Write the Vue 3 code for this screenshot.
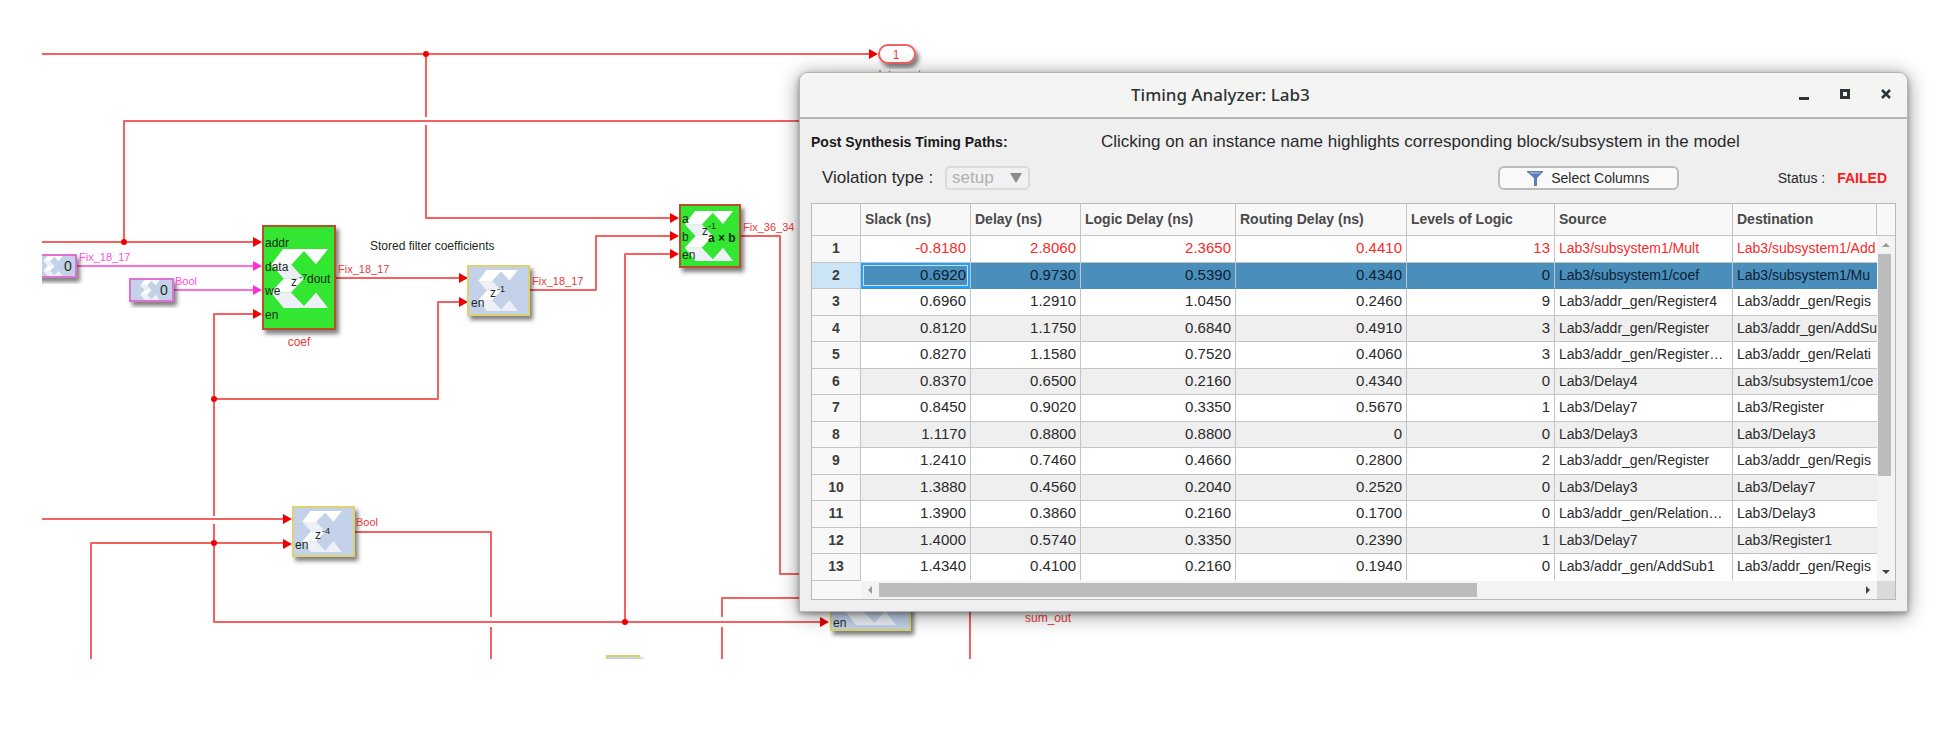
<script setup>
import { ref } from 'vue'

const columns = [
  'Slack (ns)',
  'Delay (ns)',
  'Logic Delay (ns)',
  'Routing Delay (ns)',
  'Levels of Logic',
  'Source',
  'Destination',
]

const paths = [
  ['-0.8180', '2.8060', '2.3650', '0.4410', '13', 'Lab3/subsystem1/Mult', 'Lab3/subsystem1/Add'],
  ['0.6920', '0.9730', '0.5390', '0.4340', '0', 'Lab3/subsystem1/coef', 'Lab3/subsystem1/Mu'],
  ['0.6960', '1.2910', '1.0450', '0.2460', '9', 'Lab3/addr_gen/Register4', 'Lab3/addr_gen/Regis'],
  ['0.8120', '1.1750', '0.6840', '0.4910', '3', 'Lab3/addr_gen/Register', 'Lab3/addr_gen/AddSu'],
  ['0.8270', '1.1580', '0.7520', '0.4060', '3', 'Lab3/addr_gen/Register…', 'Lab3/addr_gen/Relati'],
  ['0.8370', '0.6500', '0.2160', '0.4340', '0', 'Lab3/Delay4', 'Lab3/subsystem1/coe'],
  ['0.8450', '0.9020', '0.3350', '0.5670', '1', 'Lab3/Delay7', 'Lab3/Register'],
  ['1.1170', '0.8800', '0.8800', '0', '0', 'Lab3/Delay3', 'Lab3/Delay3'],
  ['1.2410', '0.7460', '0.4660', '0.2800', '2', 'Lab3/addr_gen/Register', 'Lab3/addr_gen/Regis'],
  ['1.3880', '0.4560', '0.2040', '0.2520', '0', 'Lab3/Delay3', 'Lab3/Delay7'],
  ['1.3900', '0.3860', '0.2160', '0.1700', '0', 'Lab3/addr_gen/Relation…', 'Lab3/Delay3'],
  ['1.4000', '0.5740', '0.3350', '0.2390', '1', 'Lab3/Delay7', 'Lab3/Register1'],
  ['1.4340', '0.4100', '0.2160', '0.1940', '0', 'Lab3/addr_gen/AddSub1', 'Lab3/addr_gen/Regis'],
]

const selected = ref(1)

const wires = [
  'M42 54H870',
  'M426 54V117M426 125V218H672',
  'M124 242V121H810',
  'M42 242H254',
  'M336 278H460',
  'M254 314H214V516M214 524V622H822',
  'M214 399H438V302H460',
  'M530 290H596V236H672',
  'M741 236H780V574H810',
  'M625 622V254H672',
  'M42 519H284',
  'M91 670V543H284',
  'M354 532H491V617M491 627V670',
  'M722 670V627M722 617V598H810',
  'M970 600V670',
]

const arrows = [
  [878, 54], [262, 242], [262, 314], [468, 278], [468, 302],
  [679, 218], [679, 236], [679, 254], [292, 519], [292, 544], [829, 622],
]

const dots = [[426, 54], [124, 242], [214, 399], [214, 543], [625, 622]]
</script>

<template>
  <main class="desktop">
    <svg class="model" role="img" aria-label="Simulink model">
      <defs>
        <clipPath id="sheet"><rect x="42" y="0" width="1870" height="659" /></clipPath>
        <filter id="drop" x="-20%" y="-20%" width="150%" height="150%">
          <feDropShadow dx="3" dy="4" stdDeviation="2" flood-color="#000" flood-opacity="0.5" />
        </filter>
        <symbol id="logo" viewBox="0 0 57 59">
          <path fill="#fff" d="M12 0H57L45 15.300L33 2L20 16H0ZM12.700 29.500H33L20 43.500H0Z" />
          <path fill="#edf1f7" d="M0 15.500H20L33 29.500H12.700ZM0 43.500H20L33 57L45 43.500L57 59H12.700Z" />
        </symbol>
      </defs>

      <g clip-path="url(#sheet)">
        <path v-for="d in wires" :key="d" class="wire" :d="d" />
        <path class="wire pink" d="M77 266H254M174 290H254" />
        <path
          v-for="[x, y] in arrows"
          :key="`a${x}-${y}`"
          class="arrow"
          :d="`M${x} ${y}l-9 -5v10z`"
        />
        <path class="arrow pink" d="M262 266l-9 -5v10zM262 290l-9 -5v10z" />
        <circle v-for="[x, y] in dots" :key="`d${x}-${y}`" class="dot" :cx="x" :cy="y" r="3" />

        <!-- constants -->
        <rect class="block const" x="33" y="255" width="43" height="22" />
        <use href="#logo" x="43" y="256" width="20" height="20" />
        <text class="port big" x="64" y="271">0</text>
        <rect class="block const" x="130" y="279" width="43" height="22" />
        <use href="#logo" x="140" y="280" width="20" height="20" />
        <text class="port big" x="160" y="295">0</text>

        <!-- coefficient RAM -->
        <rect class="block green" x="263" y="226" width="72" height="103" />
        <use href="#logo" x="271" y="249" width="57" height="59" />
        <text class="port" x="265" y="247">addr</text>
        <text class="port" x="265" y="271">data</text>
        <text class="port" x="265" y="295">we</text>
        <text class="port" x="265" y="319">en</text>
        <text class="port" x="307" y="283">dout</text>
        <text class="port" x="291" y="286">z</text>
        <text class="exp" x="299" y="280">-7</text>
        <text class="name" x="299" y="346">coef</text>

        <!-- delay after the coefficients -->
        <rect class="block blue" x="468" y="266" width="61" height="49" />
        <use href="#logo" x="478" y="270" width="40" height="41" />
        <text class="port" x="471" y="307">en</text>
        <text class="port" x="490" y="297">z</text>
        <text class="exp" x="497" y="292">-1</text>

        <!-- multiplier -->
        <rect class="block green" x="680" y="205" width="60" height="62" />
        <use href="#logo" x="684" y="211" width="50" height="50" />
        <text class="port" x="682" y="223">a</text>
        <text class="port" x="682" y="241">b</text>
        <text class="port" x="682" y="259">en</text>
        <text class="port" x="702" y="235">z</text>
        <text class="exp" x="708" y="229">-1</text>
        <text class="port bold" x="708" y="242">a × b</text>

        <!-- lower delay -->
        <rect class="block blue" x="293" y="507" width="61" height="49" />
        <use href="#logo" x="302" y="511" width="40" height="41" />
        <text class="port" x="295" y="549">en</text>
        <text class="port" x="315" y="539">z</text>
        <text class="exp" x="322" y="534">-4</text>

        <!-- blocks partly out of sight -->
        <rect class="block blue" x="831" y="560" width="79" height="70" />
        <use href="#logo" x="845" y="572" width="51" height="53" />
        <text class="port" x="833" y="627">en</text>
        <rect class="block blue" x="607" y="656" width="32" height="40" />

        <!-- output port -->
        <rect class="block outport" x="879" y="45" width="36" height="18" rx="9" />
        <text class="name" x="896" y="59">1</text>
        <text class="name" x="898" y="79">data_out</text>

        <text class="signal pink" x="79" y="261">Fix_18_17</text>
        <text class="signal pink" x="175" y="285">Bool</text>
        <text class="signal" x="338" y="273">Fix_18_17</text>
        <text class="signal" x="532" y="285">Fix_18_17</text>
        <text class="signal" x="743" y="231">Fix_36_34</text>
        <text class="signal" x="356" y="526">Bool</text>
        <text class="name" x="1048" y="622">sum_out</text>
        <text class="note" x="370" y="250">Stored filter coefficients</text>
      </g>
    </svg>

    <section class="window" aria-labelledby="window-title">
      <header class="titlebar">
        <h1 id="window-title">Timing Analyzer: Lab3</h1>
        <div class="controls">
          <button type="button" aria-label="Minimize">
            <svg width="12" height="12"><path d="M1 10.500H11" stroke-width="3" /></svg>
          </button>
          <button type="button" aria-label="Maximize">
            <svg width="12" height="12"><path d="M2.500 2.500H9.500V9.500H2.500Z" stroke-width="3" /></svg>
          </button>
          <button type="button" aria-label="Close">
            <svg width="12" height="12"><path d="M2 2L10 10M10 2L2 10" stroke-width="2.500" /></svg>
          </button>
        </div>
      </header>

      <div class="body">
        <div class="intro">
          <h2>Post Synthesis Timing Paths:</h2>
          <p>Clicking on an instance name highlights corresponding block/subsystem in the model</p>
        </div>

        <div class="toolbar">
          <label for="violation">Violation type :</label>
          <span class="picker">
            <select id="violation" disabled>
              <option>setup</option>
            </select>
            <svg width="12" height="10" aria-hidden="true"><path d="M0 0H12L6 10Z" fill="#8c8c8c" /></svg>
          </span>
          <button type="button" class="columns">
            <svg width="16" height="16" aria-hidden="true">
              <path d="M0 1H16V2L10 8V16H7V8L0 2Z" fill="#5b7db5" />
              <path d="M2 2H14L12 4H4Z" fill="#8aa5d2" />
            </svg>
            Select Columns
          </button>
          <p class="status">Status : <strong>FAILED</strong></p>
        </div>

        <div class="frame">
          <table>
            <colgroup>
              <col class="c-index" />
              <col class="c-time" />
              <col class="c-time" />
              <col class="c-logic" />
              <col class="c-route" />
              <col class="c-level" />
              <col class="c-source" />
              <col />
            </colgroup>
            <thead>
              <tr>
                <td></td>
                <th v-for="name in columns" :key="name" scope="col">{{ name }}</th>
              </tr>
            </thead>
            <tbody>
              <tr
                v-for="(row, i) in paths"
                :key="i"
                :class="{ failing: row[0].startsWith('-'), selected: i === selected }"
                @click="selected = i"
              >
                <th scope="row">{{ i + 1 }}</th>
                <td v-for="(cell, j) in row" :key="j" :class="j < 5 ? 'number' : 'instance'">
                  <a v-if="j > 4" href="#" @click.prevent>{{ cell }}</a>
                  <template v-else>{{ cell }}</template>
                </td>
              </tr>
            </tbody>
          </table>

          <div class="vertical">
            <div class="cap"></div>
            <button type="button" class="step" aria-label="Scroll up">
              <svg width="8" height="6"><path d="M0 5L4 1L8 5Z" fill="#9a9a9a" /></svg>
            </button>
            <div class="track"><div class="thumb"></div></div>
            <button type="button" class="step" aria-label="Scroll down">
              <svg width="8" height="6"><path d="M0 1H8L4 5Z" fill="#444" /></svg>
            </button>
          </div>

          <div class="horizontal">
            <div class="cap"></div>
            <button type="button" class="step" aria-label="Scroll left">
              <svg width="6" height="8"><path d="M5 0L1 4L5 8Z" fill="#9a9a9a" /></svg>
            </button>
            <div class="track"><div class="thumb"></div></div>
            <button type="button" class="step" aria-label="Scroll right">
              <svg width="6" height="8"><path d="M1 0L5 4L1 8Z" fill="#444" /></svg>
            </button>
          </div>

          <div class="corner"></div>
        </div>
      </div>
    </section>
  </main>
</template>

<style>
body {
  margin: 0;
  background: #fff;
}
</style>

<style scoped>
.desktop {
  position: relative;
  overflow: hidden;
  min-height: 100vh;
  font-family: "Liberation Sans", Arial, sans-serif;
  font-size: 14px;
  color: #2a2a2a;
}

/* block diagram */
.model {
  display: block;
  width: 100%;
  height: 660px;
}
.wire {
  fill: none;
  stroke: #f56060;
  stroke-width: 2;
  stroke-linejoin: round;
}
.arrow,
.dot {
  fill: #f00000;
}
.wire.pink {
  stroke: #ff6fdc;
}
.arrow.pink {
  fill: #ff30d0;
}
.block {
  stroke-width: 2;
  filter: url(#drop);
}
.green {
  fill: #32e632;
  stroke: #b8502a;
}
.blue {
  fill: #c3d2e8;
  stroke: #dcd270;
}
.const {
  fill: #c3d2e8;
  stroke: #e070d4;
}
.outport {
  fill: #fff;
  stroke: #f26060;
}
.port,
.note {
  font-size: 12px;
  fill: #1c2a1c;
}
.big {
  font-size: 14px;
}
.bold {
  font-weight: bold;
}
.exp {
  font-size: 9px;
  fill: #1c2a1c;
}
.name {
  font-size: 12px;
  fill: #ea3a3a;
  text-anchor: middle;
}
.signal {
  font-size: 11px;
  fill: #ea3a3a;
}
.signal.pink {
  fill: #ff50d8;
}

/* analyzer window */
.window {
  position: absolute;
  top: 72px;
  left: 799px;
  right: 42px;
  border: 1px solid #b4b4b4;
  border-radius: 9px 9px 0 0;
  background: #efefef;
  box-shadow: 0 3px 20px rgba(0, 0, 0, 0.45), 0 2px 5px rgba(0, 0, 0, 0.3);
}
.titlebar {
  display: flex;
  align-items: center;
  justify-content: space-between;
  box-sizing: border-box;
  height: 46px;
  padding: 0 11px 2px 331px;
  border-bottom: 2px solid #b6b6b4;
  border-radius: 8px 8px 0 0;
  background: #f4f4f3;
}
h1 {
  margin: 0;
  font-family: "Noto Sans", "Open Sans", sans-serif;
  font-size: 17px;
  font-weight: 500;
  color: #2e3436;
}
.controls {
  display: flex;
  gap: 21px;
}
.controls button {
  display: flex;
  align-items: center;
  justify-content: center;
  width: 20px;
  height: 20px;
  padding: 0;
  border: 0;
  background: none;
}
.controls path {
  fill: none;
  stroke: #2e3436;
}
.body {
  padding: 13px 11px 11px;
}
.intro {
  display: grid;
  grid-template-columns: 290px 1fr;
  align-items: center;
  height: 20px;
}
h2 {
  margin: 0;
  font-size: 14px;
  color: #1a1a1a;
}
p {
  margin: 0;
}
.intro p {
  font-size: 17px;
  white-space: nowrap;
}
.toolbar {
  display: flex;
  align-items: center;
  margin: 14px 0 13px;
  padding: 0 9px 0 11px;
}
.toolbar label {
  width: 123px;
  font-size: 17px;
}
.picker {
  display: grid;
  align-items: center;
}
.picker > * {
  grid-area: 1 / 1;
}
.picker svg {
  justify-self: end;
  margin-right: 8px;
  pointer-events: none;
}
select {
  appearance: none;
  width: 85px;
  height: 24px;
  padding: 0 5px;
  border: 2px solid #dadada;
  border-radius: 5px;
  background: #f1f1f1;
  font: 17px/20px "Liberation Sans", Arial, sans-serif;
  color: #b0b0b0;
  opacity: 1;
}
.columns {
  display: flex;
  align-items: center;
  justify-content: center;
  gap: 8px;
  box-sizing: border-box;
  width: 181px;
  height: 24px;
  margin-left: auto;
  border: 2px solid #bcbcbc;
  border-radius: 6px;
  background: #f9f9f9;
  font: 14px/20px "Liberation Sans", Arial, sans-serif;
  color: #2a2a2a;
}
.status {
  display: flex;
  gap: 12px;
  margin-left: 99px;
}
.status strong {
  color: #fc1c1c;
}

/* results grid */
.frame {
  display: grid;
  grid-template-columns: minmax(0, 1fr) 18px;
  border: 1px solid #b8b8b8;
  background: #f8f8f8;
}
table {
  width: 100%;
  table-layout: fixed;
  border-collapse: separate;
  border-spacing: 0;
  font-size: 14px;
  line-height: 18px;
}
.c-index { width: 49px; }
.c-time { width: 110px; }
.c-logic { width: 155px; }
.c-route { width: 171px; }
.c-level { width: 148px; }
.c-source { width: 178px; }
th,
td {
  box-sizing: border-box;
  padding: 0 4px;
  border-right: 1px solid #c4c4c4;
  border-bottom: 1px solid #c4c4c4;
  overflow: hidden;
  white-space: nowrap;
}
thead tr {
  height: 32px;
}
thead th {
  padding-bottom: 1px;
  text-align: left;
  color: #4a4a4a;
}
tbody tr {
  height: 26px;
  background: #fff;
}
tbody tr:nth-child(odd) {
  height: 27px;
}
tbody tr:nth-child(even) {
  background: #efefef;
}
tbody th,
tbody td {
  padding-bottom: 2px;
}
tbody th {
  background: #f8f8f8;
  color: #3c3c3c;
}
tbody td:last-child {
  padding-right: 0;
  border-right: 0;
}
tbody tr:last-child td {
  border-bottom-color: #fff;
}
.number {
  font-size: 15px;
  text-align: right;
}
td a {
  color: inherit;
  text-decoration: none;
}
.failing td {
  color: #fa2a2a;
}
tbody tr.selected {
  background: #4a8ebb;
}
.selected td {
  border-bottom-color: #4a8ebb;
  color: #0c2030;
}
.selected th {
  background: #cce5f6;
}
.selected th + td {
  box-shadow: inset 0 0 0 2px #1ea2fc, inset 0 0 0 3px #cfdfe9;
}

/* scrollbars */
.vertical,
.horizontal {
  display: flex;
  background: #f3f3f3;
}
.vertical {
  flex-direction: column;
}
.vertical .cap {
  box-sizing: border-box;
  height: 32px;
  border-bottom: 1px solid #c4c4c4;
  background: #f8f8f8;
}
.horizontal {
  height: 18px;
}
.horizontal .cap {
  width: 49px;
  background: #f8f8f8;
}
.step {
  display: flex;
  align-items: center;
  justify-content: center;
  flex: none;
  width: 18px;
  height: 18px;
  padding: 0;
  border: 0;
  background: none;
}
.track {
  flex: 1;
}
.thumb {
  background: #bcbcbc;
}
.vertical .thumb {
  width: 13px;
  height: 72%;
  margin-left: 1px;
}
.horizontal .thumb {
  width: 61%;
  height: 14px;
  margin-top: 2px;
}
.corner {
  background: #dadada;
}
</style>
